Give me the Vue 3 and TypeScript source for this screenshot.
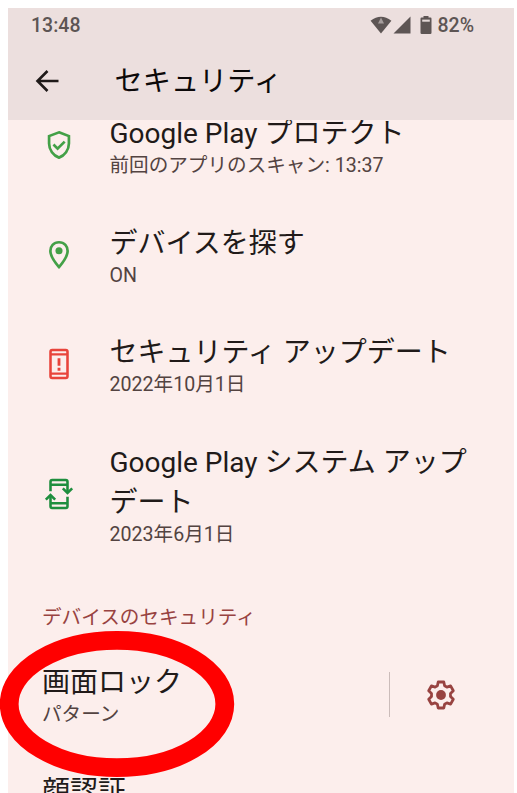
<script setup lang="ts">
interface SecurityItem {
  icon: 'shield' | 'pin' | 'alert' | 'update'
  title: string
  summary: string
}

const items: SecurityItem[] = [
  { icon: 'shield', title: 'Google Play プロテクト', summary: '前回のアプリのスキャン: 13:37' },
  { icon: 'pin', title: 'デバイスを探す', summary: 'ON' },
  { icon: 'alert', title: 'セキュリティ アップデート', summary: '2022年10月1日' },
  { icon: 'update', title: 'Google Play システム アップデート', summary: '2023年6月1日' },
]
</script>

<template>
  <div class="page">
    <main class="screen">
      <header class="top">
        <div class="status">
          <span class="time">13:48</span>
          <svg class="wifi" viewBox="0 0 22 18">
            <path d="M0.6 4.8Q11-3.4 21.4 4.8L11 17.6Z" fill="#5d5554" />
            <path d="M11 1.6L14 7.6H8Z" fill="#a59d9c" />
          </svg>
          <svg class="signal" viewBox="0 0 18 18"><path d="M17.5 0.5V17.5H0.5Z" fill="#5d5554" /></svg>
          <svg class="battery" viewBox="0 0 12 18">
            <path d="M3.5 0h5v1.6H10.5Q11.5 1.6 11.5 2.8V16.8Q11.5 18 10.3 18H1.700Q0.5 18 0.5 16.8V2.8Q0.5 1.6 1.5 1.6H3.5Z" fill="#5d5554" />
            <path d="M2.2 3.6H9.8V5.7H2.2Z" fill="#e3d8d7" />
          </svg>
          <span class="percent">82%</span>
        </div>
        <div class="appbar">
          <svg class="back" viewBox="0 0 24 24" fill="none" stroke="#1f1a19" stroke-width="2.6">
            <path d="M23.5 12H2.5M12.5 2L2.5 12L12.5 22" />
          </svg>
          <h1>セキュリティ</h1>
        </div>
      </header>

      <section class="content">
        <div v-for="item in items" :key="item.icon" class="row">
          <svg v-if="item.icon === 'shield'" class="icon" viewBox="0 0 24 24" fill="none" stroke="#43a047" stroke-width="1.9">
            <path d="M12 3.05L19 5.7V11C19 15.5 16 19.6 12 20.9C8 19.6 5 15.5 5 11V5.7Z" />
            <path d="M8.1 11.7L11 14.6L16 9.6" />
          </svg>
          <svg v-else-if="item.icon === 'pin'" class="icon" viewBox="0 0 24 24">
            <path d="M12 3C8.1 3 5.9 5.900 5.900 9.100C5.900 13 9.300 17.400 12 20.500C14.700 17.400 18.100 13 18.100 9.100C18.100 5.900 15.900 3 12 3Z" fill="none" stroke="#43a047" stroke-width="1.9" />
            <circle cx="12" cy="9" r="2.5" fill="#43a047" />
          </svg>
          <svg v-else-if="item.icon === 'alert'" class="icon" viewBox="0 0 24 24" fill="none" stroke="#e8443b" stroke-width="1.8">
            <rect x="6" y="2.1" width="12" height="19.8" rx="1.2" />
            <path d="M6 5.2H18M6 18.8H18" stroke-width="1.600" />
            <path d="M12 8V13.2M12 14.700V16.700" stroke-width="2" />
          </svg>
          <svg v-else class="icon" viewBox="0 0 24 24" fill="none" stroke="#1e8e3e" stroke-width="1.8">
            <path d="M6 10V3.3Q6 2.1 7.2 2.1H16.8Q18 2.1 18 3.3V10.500M6 5.500H18" />
            <path d="M14.7 8L18 11.3L21.3 8" />
            <path d="M18 14V20.7Q18 21.9 16.8 21.9H7.200Q6 21.900 6 20.700V13.500M6 18.500H18" />
            <path d="M2.7 16L6 12.7L9.3 16" />
          </svg>
          <div class="text">
            <div class="title">{{ item.title }}</div>
            <div class="summary">{{ item.summary }}</div>
          </div>
        </div>

        <h2>デバイスのセキュリティ</h2>

        <div class="lock">
          <div class="lock-text">
            <div class="title">画面ロック</div>
            <div class="summary">パターン</div>
          </div>
          <div class="lock-action">
            <svg class="gear" viewBox="0 0 30 30">
              <path d="M12.2 2H17.8L18.6 5.8L20.9 7.1L24.6 5.9L27.3 10.7L24.5 13.4V16.6L27.3 19.3L24.6 24.1L20.9 22.9L18.6 24.2L17.8 28H12.2L11.4 24.2L9.1 22.9L5.4 24.1L2.7 19.3L5.5 16.6V13.4L2.7 10.7L5.4 5.9L9.1 7.1L11.4 5.8Z" fill="none" stroke="#984341" stroke-width="2.8" stroke-linejoin="round" />
              <circle cx="15" cy="15" r="4.9" fill="#984341" />
            </svg>
          </div>
        </div>

        <div class="title face">顔認証</div>
      </section>
    </main>

    <svg class="marker" viewBox="0 0 236 148">
      <ellipse cx="118" cy="74" rx="107.8" ry="63.6" fill="none" stroke="#ff0000" stroke-width="18.8" />
    </svg>
  </div>
</template>

<style>
body {
  background: #fff;
  overflow: hidden;
}
</style>

<style scoped>
.page {
  position: relative;
  box-sizing: border-box;
  width: 517px;
  height: 793px;
  padding: 8px 3px 0 8px;
  overflow: hidden;
  font-family: Roboto, "Noto Sans CJK JP", sans-serif;
}
.screen {
  height: 785px;
  display: flex;
  flex-direction: column;
  background: #fceeec;
}
.top {
  flex: none;
  height: 112px;
  background: #ecdfde;
}
.status {
  display: flex;
  align-items: center;
  height: 34px;
  padding: 0 40px 0 23px;
  color: #5d5554;
  font-size: 19.5px;
  font-weight: 500;
}
.time,
.percent {
  padding-top: 1px;
}
.time {
  margin-right: auto;
}
.wifi {
  width: 22px;
  height: 18px;
  margin-right: 1px;
}
.signal {
  width: 18px;
  height: 18px;
  margin-right: 9px;
}
.battery {
  width: 12px;
  height: 18px;
  margin-right: 5px;
}
.appbar {
  display: flex;
  align-items: center;
  height: 78px;
  padding-left: 27px;
}
.back {
  width: 24px;
  height: 24px;
  margin-right: 55.5px;
}
h1 {
  margin: 2px 0 0;
  font-size: 28.2px;
  font-weight: 400;
  line-height: 40px;
  color: #0c0909;
}
.content {
  flex: 1;
  min-height: 0;
  overflow: hidden;
  display: flow-root;
}
.row {
  display: flex;
  align-items: center;
  margin-bottom: 45.5px;
  padding: 0 33.5px;
}
.row:first-child {
  margin-top: -6px;
}
.icon {
  flex: none;
  width: 34px;
  height: 34px;
  margin: -2px 34px 0 0;
}
.text {
  width: 376px;
}
.title {
  font-size: 28px;
  line-height: 40px;
  color: #211a19;
}
.summary {
  font-size: 19.6px;
  line-height: 24px;
  color: #534341;
}
h2 {
  margin: 59px 0 0 34px;
  font-size: 19.6px;
  font-weight: 400;
  line-height: 24px;
  color: #984341;
}
.lock {
  display: flex;
  align-items: center;
  justify-content: space-between;
  margin-top: 33px;
  padding: 0 58px 0 34px;
}
.lock-action {
  display: flex;
  align-items: center;
  justify-content: flex-end;
  width: 66px;
  height: 45px;
  border-left: 1px solid #cbbcba;
}
.gear {
  width: 30px;
  height: 30px;
}
.face {
  margin: 45px 0 0 34px;
}
.marker {
  position: absolute;
  left: -1px;
  top: 630px;
  width: 236px;
  height: 148px;
}
</style>
